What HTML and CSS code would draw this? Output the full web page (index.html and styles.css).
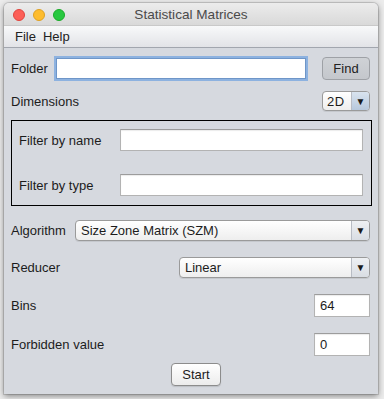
FILE: index.html
```html
<!DOCTYPE html>
<html>
<head>
<meta charset="utf-8">
<link rel="stylesheet" href="styles.css">
</head>
<body>
<div class="window">
  <div class="titlebar">
    <div class="lights">
      <span class="light red"></span>
      <span class="light yellow"></span>
      <span class="light green"></span>
    </div>
    <div class="title">Statistical Matrices</div>
  </div>
  <div class="menubar">
    <span class="menu">File</span>
    <span class="menu">Help</span>
  </div>
  <div class="content">
    <div class="row row-folder">
      <span class="label">Folder</span>
      <div class="field focus"></div>
      <div class="btn btn-find">Find</div>
    </div>
    <div class="row row-dim">
      <span class="label">Dimensions</span>
      <div class="combo combo-dim"><span class="combo-text">2D</span><span class="arrow blue">&#9660;</span></div>
    </div>
    <div class="filterbox">
      <div class="frow">
        <span class="flabel">Filter by name</span>
        <div class="field ffield"></div>
      </div>
      <div class="frow">
        <span class="flabel">Filter by type</span>
        <div class="field ffield"></div>
      </div>
    </div>
    <div class="row row-alg">
      <span class="label">Algorithm</span>
      <div class="combo combo-alg"><span class="combo-text">Size Zone Matrix (SZM)</span><span class="arrow">&#9660;</span></div>
    </div>
    <div class="row row-red">
      <span class="label">Reducer</span>
      <div class="combo combo-red"><span class="combo-text">Linear</span><span class="arrow">&#9660;</span></div>
    </div>
    <div class="row row-num">
      <span class="label">Bins</span>
      <div class="field small">64</div>
    </div>
    <div class="row row-num row-forb">
      <span class="label">Forbidden value</span>
      <div class="field small">0</div>
    </div>
    <div class="row row-start">
      <div class="btn btn-start">Start</div>
    </div>
  </div>
</div>
</body>
</html>
```
FILE: styles.css
```css
html, body {
  margin: 0;
  padding: 0;
}
body {
  width: 384px;
  height: 399px;
  background: #ececec;
  font-family: "Lucida Grande", "Liberation Sans", Arial, sans-serif;
  font-size: 13px;
  color: #1c1c1c;
  overflow: hidden;
}
.window {
  margin: 3px 0 0 4px;
  width: 374px;
  height: 391px;
  border-radius: 5px 5px 0 0;
  background: #d6d9df;
  box-shadow: 0 2px 6px rgba(0,0,0,0.45), 0 0 0 1px rgba(0,0,0,0.12);
  overflow: hidden;
  display: flex;
  flex-direction: column;
}
.titlebar {
  height: 23px;
  background: linear-gradient(#ececec, #d9d9d9);
  display: flex;
  align-items: center;
  position: relative;
  border-bottom: 1px solid #c9c9c9;
  box-sizing: border-box;
}
.lights {
  display: flex;
  gap: 8px;
  padding-left: 9px;
  padding-top: 1px;
}
.light {
  width: 12px;
  height: 12px;
  border-radius: 50%;
  box-sizing: border-box;
}
.red { background: #fc5f57; border: 1px solid #e0443e; }
.yellow { background: #fdbc2e; border: 1px solid #dea123; }
.green { background: #28c840; border: 1px solid #1aab29; }
.title {
  position: absolute;
  left: 0;
  right: 0;
  top: 4px;
  text-align: center;
  color: #4a4a4a;
  font-size: 13.6px;
}
.menubar {
  height: 22px;
  box-sizing: border-box;
  background: linear-gradient(#f8f9fa, #e2e3e7);
  border-bottom: 1px solid #a2a6ae;
  display: flex;
  align-items: center;
  padding-left: 11px;
  gap: 7px;
  color: #222;
}
.content {
  padding: 8px 8px 0 7px;
  display: flex;
  flex-direction: column;
}
.row {
  display: flex;
  align-items: center;
}
.label {
  white-space: nowrap;
}
.row-folder { height: 25px; }
.row-folder .label { width: 43px; }
.field {
  background: #fff;
  border: 1px solid #b3b3b3;
  border-top-color: #9c9c9c;
  box-shadow: inset 0 1px 1px rgba(0,0,0,0.08);
  box-sizing: border-box;
}
.focus {
  width: 254px;
  height: 25px;
  border: 2px solid #8db2e0;
  box-shadow: inset 0 0 0 1px #6f96c8;
}
.btn {
  box-sizing: border-box;
  height: 23px;
  border-radius: 4px;
  display: flex;
  align-items: center;
  justify-content: center;
}
.btn-find {
  margin-left: auto;
  width: 48px;
  background: linear-gradient(#cfd2d6, #c4c7cc);
  border: 1px solid #9ea1a6;
  color: #222;
}
.row-dim {
  margin-top: 10px;
  height: 20px;
}
.combo {
  margin-left: auto;
  box-sizing: border-box;
  height: 21px;
  border: 1px solid #9a9a9a;
  border-radius: 4px;
  background: linear-gradient(#ffffff, #eeeeee);
  display: flex;
  align-items: center;
  overflow: hidden;
  box-shadow: 0 1px 0 rgba(0,0,0,0.08);
}
.combo-text {
  flex: 1;
  padding-left: 5px;
  white-space: nowrap;
}
.arrow {
  width: 17px;
  height: 100%;
  display: flex;
  align-items: center;
  justify-content: center;
  font-size: 10px;
  color: #1a1a1a;
  border-left: 1px solid #b8bcc4;
  background: linear-gradient(#eef0f3, #d9dde3);
}
.arrow.blue {
  background: linear-gradient(#d9e3ef, #b7c8dc);
}
.combo-dim {
  width: 48px;
  height: 20px;
}
.combo-dim .combo-text { padding-left: 4px; letter-spacing: 0.5px; }
.filterbox {
  margin-top: 9px;
  margin-right: -2px;
  border: 1px solid #000;
  padding: 8px 8px 9px 7px;
  display: flex;
  flex-direction: column;
  gap: 23px;
}
.frow {
  display: flex;
  align-items: center;
  height: 22px;
}
.flabel {
  width: 101px;
  white-space: nowrap;
}
.ffield {
  flex: 1;
  height: 22px;
}
.row-alg {
  margin-top: 14px;
  height: 21px;
}
.combo-alg {
  width: 295px;
}
.row-red {
  margin-top: 16px;
  height: 21px;
}
.combo-red {
  width: 191px;
}
.row-num {
  margin-top: 16px;
  height: 23px;
}
.small {
  margin-left: auto;
  width: 56px;
  height: 23px;
  padding-left: 5px;
  display: flex;
  align-items: center;
}
.row-start {
  margin-top: 7px;
  justify-content: center;
  padding-left: 11px;
}
.btn-start {
  width: 50px;
  background: linear-gradient(#ffffff, #ececec);
  border: 1px solid #8c8c8c;
  box-shadow: 0 1px 1px rgba(0,0,0,0.12);
}
```
